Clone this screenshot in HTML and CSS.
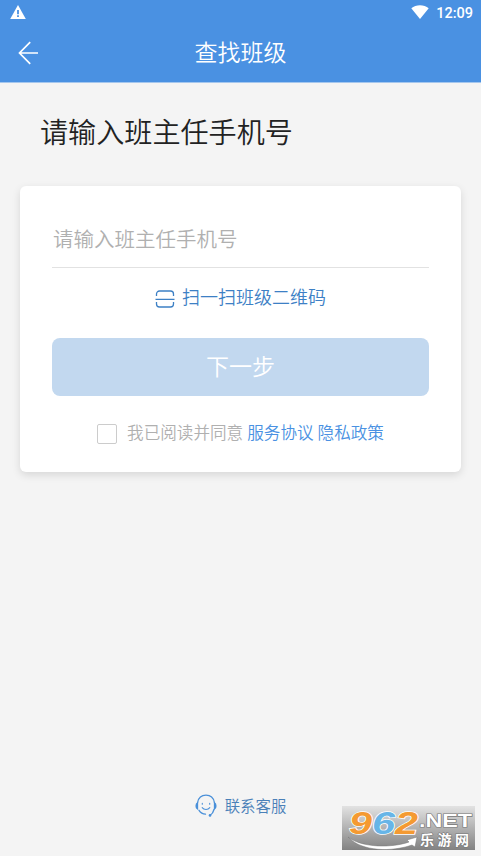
FILE: index.html
```
<!DOCTYPE html>
<html lang="zh-CN">
<head>
  <meta charset="UTF-8" />
  <meta name="viewport" content="width=device-width, initial-scale=1.0" />
  <title>查找班级</title>
  <link rel="stylesheet" href="styles.css">
</head>
<body>
  <header>
    <div class="status-bar">
      <svg class="warn-icon" width="16" height="14" viewBox="0 0 16 14">
        <path d="M8 0 L15.8 14 H0.2 Z" fill="#fff" />
        <path d="M7.1 5h1.8v4.2H7.1zM7.1 10.3h1.8v1.8H7.1z" fill="#4a91e2" />
      </svg>
      <svg class="wifi-icon" width="18" height="14" viewBox="0 0 18 14">
        <path d="M9 14 L0.3 3.2 C5 -0.9 13 -0.9 17.7 3.2 Z" fill="#fff" />
      </svg>
      <span class="time">12:09</span>
    </div>
    <div class="nav-bar">
      <svg class="back-icon" width="21" height="24" viewBox="0 0 21 24" fill="none" stroke="#fff" stroke-width="1.7">
        <path d="M12.2 1.2 L1.5 12 L12.2 22.8 M1.5 12 H20" />
      </svg>
      <h1>查找班级</h1>
    </div>
  </header>

  <main>
    <h2>请输入班主任手机号</h2>

    <form class="card">
      <input type="tel" class="phone" placeholder="请输入班主任手机号" />

      <a class="scan">
        <svg width="20" height="18" viewBox="0 0 20 18" fill="none" stroke="#3d80c5" stroke-width="1.3">
          <path d="M1.500 6V4a3 3 0 0 1 3-3h11a3 3 0 0 1 3 3v2M1.500 12V14a3 3 0 0 0 3 3h11a3 3 0 0 0 3-3v-2M0.500 9.300h19" />
        </svg>
        <span>扫一扫班级二维码</span>
      </a>

      <button type="button" class="next" disabled>下一步</button>

      <div class="agree">
        <input type="checkbox" class="check" />
        <span>我已阅读并同意</span>
        <a>服务协议</a>
        <a>隐私政策</a>
      </div>
    </form>
  </main>

  <footer>
    <svg width="22" height="23" viewBox="0 0 22 23" fill="none" stroke="#4a90d9" stroke-width="1.3" stroke-linecap="round">
      <path d="M2.600 8.500 C3.500 3.800 6.800 1.200 11 1.200 S18.500 3.800 19.400 8.500" />
      <path d="M2.500 8.800 C0.600 9.800 0.600 14 2.500 15 Z M19.500 8.800 C21.400 9.800 21.400 14 19.500 15 Z" fill="#4a90d9" />
      <path d="M4 16.300 C5.600 18.800 8 20 10.500 20.100 M19 15.500 C18.300 18.300 17 20.200 15.200 21.200" />
      <path d="M7.300 9.300v1M14.700 9.300v1M7.200 13.700 C9 16 13 16 14.800 13.700" stroke-width="1.100" />
      <circle cx="15" cy="21.400" r="1.300" fill="#4a90d9" stroke="none" />
    </svg>
    <span>联系客服</span>
  </footer>

  <svg class="watermark" width="133" height="44" viewBox="0 0 133 44">
    <defs>
      <linearGradient id="silver" x1="0" y1="0" x2="0" y2="1">
        <stop offset="0" stop-color="#e2e2e2" />
        <stop offset="1" stop-color="#828282" />
      </linearGradient>
    </defs>
    <rect width="133" height="44" fill="url(#silver)" />
    <path d="M6 31 C20 42 50 42 67 36 L65 34 L75 31 L73 41 L70 39 C50 46 20 46 6 31 Z" fill="#fff" stroke="#777" stroke-width="0.500" />
    <g class="digits" stroke="#fff" stroke-width="1.500" paint-order="stroke">
      <text x="7" y="28" textLength="23" lengthAdjust="spacingAndGlyphs" fill="#f49a32">9</text>
      <text x="30" y="28" textLength="23" lengthAdjust="spacingAndGlyphs" fill="#67b5e7">6</text>
      <text x="53" y="28" textLength="23" lengthAdjust="spacingAndGlyphs" fill="#f49a32">2</text>
    </g>
    <g fill="#fff" stroke="#777" stroke-width="1.200" paint-order="stroke">
      <text class="net" x="77" y="21" textLength="53" lengthAdjust="spacingAndGlyphs">.NET</text>
      <text class="brand" x="78" y="39" textLength="49">乐游网</text>
    </g>
  </svg>
</body>
</html>
```

FILE: styles.css
```
:root {
  --primary: #4a91e2;
  --bg: #f4f4f4;
  --muted: #b0b0b0;
}

* {
  box-sizing: border-box;
}

body {
  margin: 0;
  min-height: 856px;
  display: flex;
  flex-direction: column;
  font-family: "Noto Sans CJK SC", sans-serif;
  font-weight: 350;
  background: var(--bg);
  color: #222;
}

header {
  height: 82px;
  background: var(--primary);
  color: white;
  box-shadow: 0 1px 0 #a5c7ee;
}

.status-bar {
  display: flex;
  align-items: center;
  height: 25px;
  padding: 0 8px 0 10px;
}

.warn-icon,
.wifi-icon {
  margin-bottom: 1px;
}

.wifi-icon {
  margin-left: auto;
}

.time {
  margin: 2px 0 0 7px;
  font: 500 14.5px Roboto, sans-serif;
}

.nav-bar {
  display: grid;
  grid-template-columns: 40px 1fr 40px;
  align-items: center;
  height: 53px;
}

.back-icon {
  margin: 2px 0 0 18px;
}

h1 {
  margin: 0 0 1px;
  font-size: 23px;
  line-height: 30px;
  font-weight: 350;
  text-align: center;
}

main {
  flex: 1;
  padding: 29px 20px 0;
}

h2 {
  margin: 0 0 35px 20px;
  font-size: 28.1px;
  line-height: 40px;
  font-weight: 350;
}

.card {
  display: flex;
  flex-direction: column;
  height: 286px;
  padding: 30px 32px 0;
  background: white;
  border-radius: 6px;
  box-shadow: 0 3px 8px rgba(0, 0, 0, 0.12);
}

.phone {
  height: 52px;
  padding: 0 0 8px 1px;
  border: none;
  border-bottom: 1px solid #e2e2e2;
  outline: none;
  background: none;
  font: 350 20.5px "Noto Sans CJK SC", sans-serif;
}

.phone::placeholder {
  color: var(--muted);
}

.scan {
  display: flex;
  justify-content: center;
  gap: 7px;
  height: 26px;
  margin: 15px 0 29px;
  color: #3d80c5;
  font-size: 18px;
  line-height: 26px;
}

.scan svg {
  margin-top: 7px;
}

.next {
  height: 58px;
  padding: 0 0 5px;
  border: none;
  border-radius: 8px;
  background: #c2d8ef;
  color: white;
  font: 350 23px "Noto Sans CJK SC", sans-serif;
}

.agree {
  display: flex;
  justify-content: center;
  gap: 4px;
  margin-top: 24px;
  font-size: 16.6px;
  line-height: 24px;
  color: var(--muted);
}

.agree a {
  color: var(--primary);
}

.check {
  appearance: none;
  width: 20px;
  height: 20px;
  margin: 4px 6px 0 0;
  border: 1.5px solid #ccc;
  border-radius: 2px;
}

footer {
  display: flex;
  justify-content: center;
  gap: 8px;
  height: 62px;
  color: #4a80b8;
  font-size: 15.4px;
  line-height: 22px;
}

.watermark {
  position: absolute;
  left: 342px;
  top: 806px;
}

.digits {
  font: italic bold 32px "Liberation Sans", sans-serif;
}

.net {
  font: bold 18px "Liberation Sans", sans-serif;
}

.brand {
  font: bold 14px "Noto Sans CJK SC", sans-serif;
}
```
